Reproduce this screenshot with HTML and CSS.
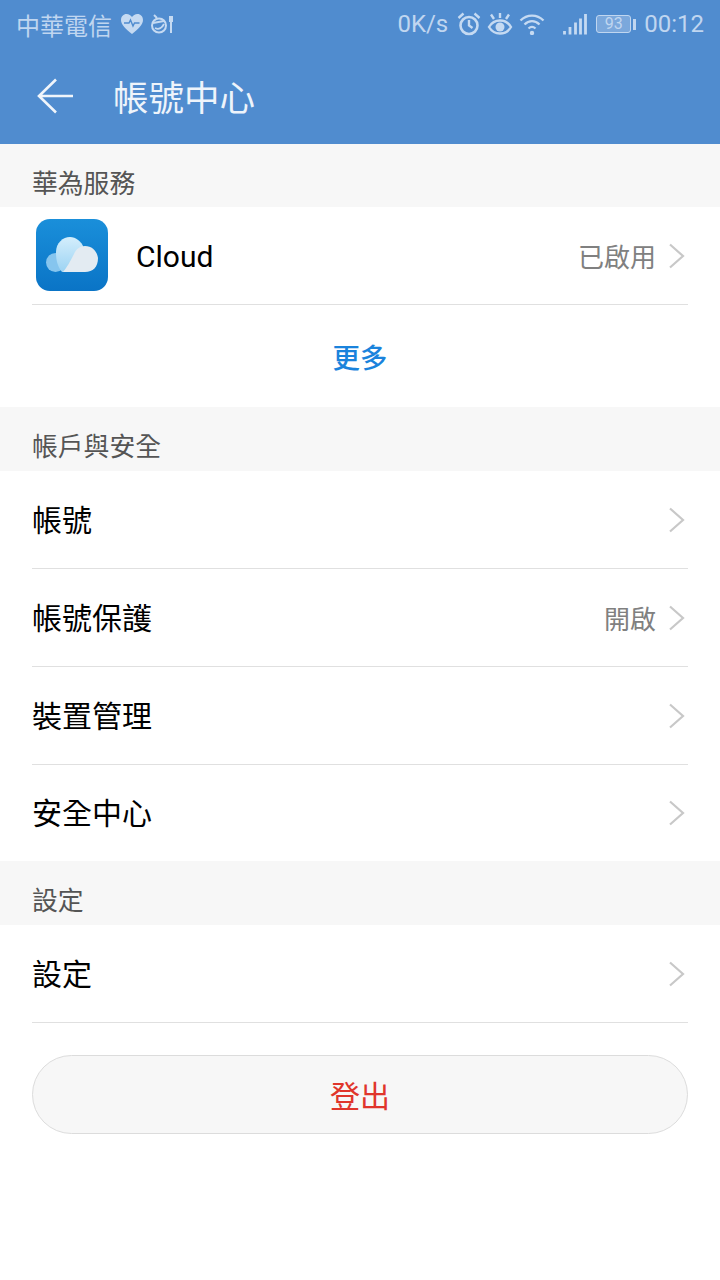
FILE: index.html
```html
<!DOCTYPE html>
<html lang="zh-Hant">
<head>
<meta charset="utf-8">
<title>帳號中心</title>
<link rel="stylesheet" href="styles.css">
</head>
<body>

<svg class="defs" width="0" height="0">
	<symbol id="chev" viewBox="0 0 17 26"><path d="M2 1.500L15 13 2 24.500" fill="none" stroke="#c8c8c8" stroke-width="2.200"/></symbol>
</svg>

<div class="header">
	<div class="status">
		<span class="carrier">中華電信</span>
		<svg class="ico-heart" width="24" height="22" viewBox="0 0 24 22"><path d="M12 21C6 16 1 12 1 7c0-3.500 2.500-6 5.500-6C9 1 11 2.500 12 4c1-1.500 3-3 5.500-3C20.500 1 23 3.500 23 7c0 5-5 9-11 14z" fill="#c5daf2"/><path d="M4 10h5l1.500-3 2.500 6 1.500-3h5" fill="none" stroke="#508ccf" stroke-width="1.400"/></svg>
		<svg class="ico-food" width="24" height="20" viewBox="0 0 24 20"><circle cx="9" cy="11.500" r="7" fill="none" stroke="#c5daf2" stroke-width="2"/><path d="M3 9l11-2M5 14c4 2 7 0 9-4" fill="none" stroke="#c5daf2" stroke-width="1.800"/><path d="M4 1l3 3" fill="none" stroke="#c5daf2" stroke-width="2"/><path d="M19 2h4v6h-1v11h-2V8h-1z" fill="#c5daf2"/></svg>
		<span class="status-space"></span>
		<span class="speed">0K/s</span>
		<svg class="ico-alarm" width="24" height="24" viewBox="0 0 24 24"><circle cx="12" cy="13.500" r="8.500" fill="none" stroke="#c5daf2" stroke-width="2.600"/><path d="M12 8v5.500l3.500 2.500M1.500 6L6.500 1.500M22.500 6l-5-4.500" fill="none" stroke="#c5daf2" stroke-width="2.400"/></svg>
		<svg class="ico-eye" width="26" height="24" viewBox="0 0 26 24"><path d="M2 15c3-5 6.500-6.500 11-6.500S21 10 24 15c-3 5-6.500 6.500-11 6.500S5 20 2 15z" fill="none" stroke="#c5daf2" stroke-width="2.400"/><circle cx="13" cy="15" r="4.500" fill="#c5daf2"/><path d="M4 2.500l3 4.500M13 1v5M22 2.500L19 7" fill="none" stroke="#c5daf2" stroke-width="2.400"/></svg>
		<svg class="ico-wifi" width="26" height="22" viewBox="0 0 26 22"><path d="M1.500 7.500c6.500-6.500 16.500-6.500 23 0M5.500 11.500c4.500-4.500 10.500-4.500 15 0M9.500 15.500c2.200-2 4.800-2 7 0" fill="none" stroke="#c5daf2" stroke-width="2.300"/><circle cx="13" cy="20" r="2.200" fill="#c5daf2"/></svg>
		<svg class="ico-signal" width="24" height="22" viewBox="0 0 24 22"><path d="M1.500 18v3.500M7 14v7.500M12.500 9.500v12M17.500 5.500v16M22.500 1v20.500" fill="none" stroke="#c5daf2" stroke-width="2.800"/></svg>
		<div class="battery">
			<div class="battery-body"><span class="battery-num">93</span></div>
			<div class="battery-tip"></div>
		</div>
		<span class="clock">00:12</span>
	</div>
	<div class="appbar">
		<svg class="back" width="38" height="36" viewBox="0 0 38 36"><path d="M19 1.500L2 18l17 16.500M2 18h34" fill="none" stroke="#f0f5fb" stroke-width="2.600"/></svg>
		<span class="title">帳號中心</span>
	</div>
</div>

<div class="sec sec-first">華為服務</div>
<div class="group">
	<div class="row">
		<svg class="cloud" width="72" height="72" viewBox="0 0 72 72">
			<defs>
				<linearGradient id="bg" x1="0" y1="0" x2="0" y2="1"><stop offset="0" stop-color="#1a8fda"/><stop offset="1" stop-color="#0a74c6"/></linearGradient>
				<linearGradient id="puff" x1="0" y1="0" x2="0" y2="1"><stop offset="0" stop-color="#d4eefc"/><stop offset="1" stop-color="#9cd3f3"/></linearGradient>
			</defs>
			<rect width="72" height="72" rx="14" fill="url(#bg)"/>
			<circle cx="19.500" cy="43.500" r="9.500" fill="#86c5ee"/>
			<path d="M26 53C21 47 20 40 20 33 20 24 27 18 34 18 40 18 45 22 48 29L40 53z" fill="url(#puff)"/>
			<path d="M27 53c3-3 8-12 11-18 2-5 6-8 11-8 7 0 12 5 13 12 0 9-5 14-13 14z" fill="#e3ebf2"/>
		</svg>
		<span class="label label-app">Cloud</span>
		<span class="value">已啟用</span>
		<svg class="chev" width="17" height="26"><use href="#chev"/></svg>
	</div>
	<div class="more">更多</div>
</div>

<div class="sec">帳戶與安全</div>
<div class="group">
	<div class="row"><span class="label">帳號</span><svg class="chev" width="17" height="26"><use href="#chev"/></svg></div>
	<div class="row"><span class="label">帳號保護</span><span class="value">開啟</span><svg class="chev" width="17" height="26"><use href="#chev"/></svg></div>
	<div class="row"><span class="label">裝置管理</span><svg class="chev" width="17" height="26"><use href="#chev"/></svg></div>
	<div class="row row-last"><span class="label">安全中心</span><svg class="chev" width="17" height="26"><use href="#chev"/></svg></div>
</div>

<div class="sec">設定</div>
<div class="group">
	<div class="row"><span class="label">設定</span><svg class="chev" width="17" height="26"><use href="#chev"/></svg></div>
</div>

<div class="logout-wrap">
	<div class="logout">登出</div>
</div>

</body>
</html>
```

FILE: styles.css
```css
body {
	margin: 0;
	background-color: #fff;
	font-family: "Noto Sans CJK TC", Roboto, sans-serif;
	color: #000;
}
.defs {
	display: block;
}
.header {
	height: 144px;
	background-color: #508ccf;
}
.status {
	height: 48px;
	display: flex;
	align-items: center;
	padding: 0 16px;
	box-sizing: border-box;
	color: #c0d6f0;
	font-size: 24px;
}
.status svg {
	flex: none;
}
.status-space {
	flex: 1;
}
.carrier {
	margin-right: 8px;
}
.ico-food {
	margin-left: 6px;
}
.speed, .clock {
	font-family: Roboto, sans-serif;
	font-size: 24px;
}
.ico-alarm {
	margin-left: 9px;
}
.ico-eye {
	margin-left: 6px;
}
.ico-wifi {
	margin-left: 6px;
}
.ico-signal {
	margin-left: 18px;
}
.battery {
	display: flex;
	align-items: center;
	margin-left: 9px;
	margin-right: 8px;
}
.battery-body {
	width: 33px;
	height: 16px;
	border: 1px solid #c0d6f0;
	border-radius: 3px;
	background-color: #7ba8dc;
	text-align: center;
}
.battery-num {
	display: block;
	font-family: Roboto, sans-serif;
	font-size: 16px;
	line-height: 16px;
}
.battery-tip {
	width: 3px;
	height: 11px;
	margin-left: 2px;
	background-color: #c0d6f0;
}
.appbar {
	height: 96px;
	display: flex;
	align-items: center;
	padding-left: 37px;
}
.back {
	margin-right: 38px;
}
.title {
	font-size: 35.500px;
	color: #eef4fb;
	margin-bottom: 2px;
}
.sec {
	height: 64px;
	box-sizing: border-box;
	padding: 21px 0 0 32px;
	background-color: #f7f7f7;
	font-size: 25.800px;
	line-height: 34px;
	color: #555;
}
.sec-first {
	height: 63px;
}
.group {
	background-color: #fff;
}
.row {
	height: 98px;
	margin: 0 32px;
	box-sizing: border-box;
	border-bottom: 1px solid #e0e0e0;
	display: flex;
	align-items: center;
}
.row-last {
	height: 96px;
	border-bottom: 0;
}
.cloud {
	margin: 0 28px 1px 4px;
}
.label {
	flex: 1;
	padding-bottom: 4px;
	font-size: 30px;
}
.label-app {
	padding: 2px 0 0;
	font-family: Roboto, sans-serif;
}
.value {
	font-size: 26px;
	color: #808080;
}
.chev {
	flex: none;
	margin: 0 3px 0 12px;
}
.more {
	height: 102px;
	display: flex;
	align-items: center;
	justify-content: center;
	font-size: 27.500px;
	font-weight: 500;
	color: #1a83dc;
}
.logout-wrap {
	padding: 32px 32px 0;
}
.logout {
	height: 79px;
	box-sizing: border-box;
	border: 1px solid #dcdcdc;
	border-radius: 40px;
	background-color: #f7f7f7;
	display: flex;
	align-items: center;
	justify-content: center;
	padding-bottom: 2px;
	font-size: 30px;
	color: #e0352b;
}
```
